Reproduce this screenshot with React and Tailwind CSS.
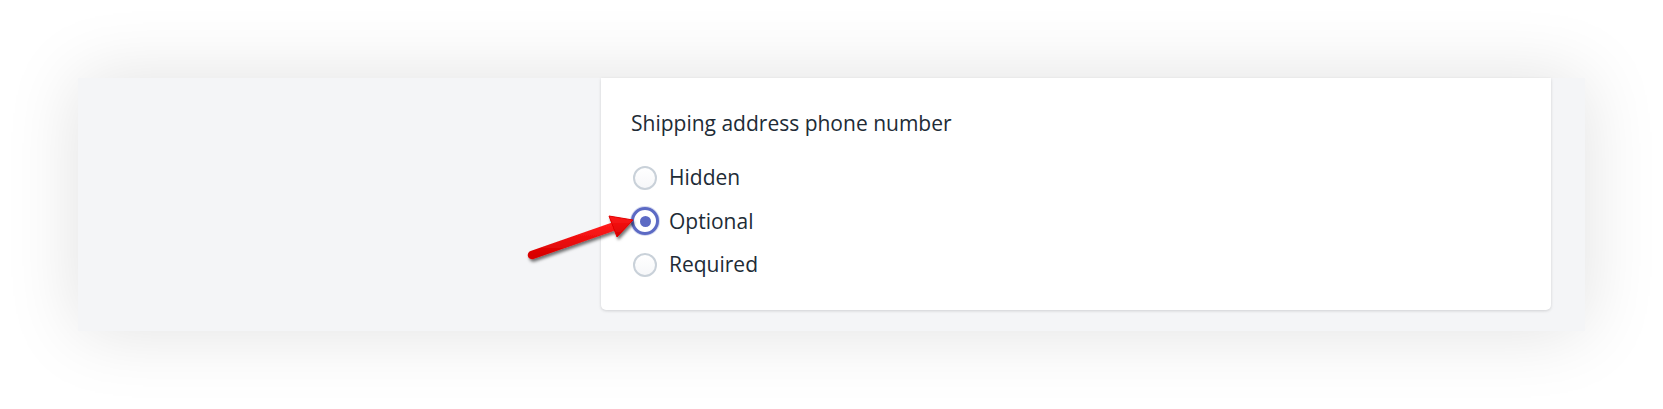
import React from "react";

const OPTIONS = [
  { label: "Hidden", checked: false },
  { label: "Optional", checked: true },
  { label: "Required", checked: false },
];

function Radio({ checked }) {
  if (checked) {
    return (
      <span className="flex items-center justify-center w-[28px] h-[28px] rounded-full border-[3px] border-[#5c6ac4] bg-white shadow-[0_0_0_1px_rgba(92,106,196,0.25)]">
        <span className="w-[11px] h-[11px] rounded-full bg-[#5c6ac4]" />
      </span>
    );
  }
  return (
    <span className="w-[24px] h-[24px] rounded-full border-2 border-[#c9d1d9] bg-gradient-to-b from-white to-[#f6f7f9]" />
  );
}

function Arrow() {
  // annotation arrow pointing at the selected radio
  return (
    <svg className="absolute left-[520px] top-[205px]" width="130" height="60" viewBox="0 0 130 60">
      <defs>
        <filter id="sh" x="-20%" y="-40%" width="140%" height="180%">
          <feDropShadow dx="1.5" dy="2.5" stdDeviation="1.5" floodColor="#000" floodOpacity="0.55" />
        </filter>
        <linearGradient id="red" x1="0" y1="0" x2="0" y2="1">
          <stop offset="0" stopColor="#ff1a1a" />
          <stop offset="1" stopColor="#d80000" />
        </linearGradient>
      </defs>
      <g filter="url(#sh)">
        <line x1="12" y1="50" x2="95" y2="21" stroke="url(#red)" strokeWidth="8.5" strokeLinecap="round" />
        <polygon points="113,15 97,32 89,11" fill="url(#red)" stroke="#e00000" strokeWidth="1" strokeLinejoin="round" />
      </g>
    </svg>
  );
}

export default function App() {
  return (
    <div className="relative w-[1663px] h-[409px] bg-white overflow-hidden" style={{ fontFamily: '"Segoe UI", "Open Sans", "Noto Sans", sans-serif' }}>
      <div className="ml-[78px] pt-[78px]">
        <div className="flex w-[1507px] h-[253px] bg-[#f4f5f7] shadow-[0_0_70px_rgba(0,0,0,0.12)]">
          <div className="w-[523px]" />
          <div className="w-[950px] h-[232px] bg-white rounded-b-[5px] shadow-[0_1px_3px_rgba(63,63,68,0.2)] pl-[30px] pt-[30px]">
            <p className="text-[21px] leading-[30px] text-[#212b36]">Shipping address phone number</p>
            <ul className="mt-[18px] flex flex-col">
              {OPTIONS.map((o) => (
                <li key={o.label} className="flex items-center h-[43.5px]">
                  <span className="w-[28px] flex items-center justify-center">
                    <Radio checked={o.checked} />
                  </span>
                  <span className="ml-[10px] text-[21px] text-[#212b36]">{o.label}</span>
                </li>
              ))}
            </ul>
          </div>
        </div>
      </div>
      <Arrow />
    </div>
  );
}
